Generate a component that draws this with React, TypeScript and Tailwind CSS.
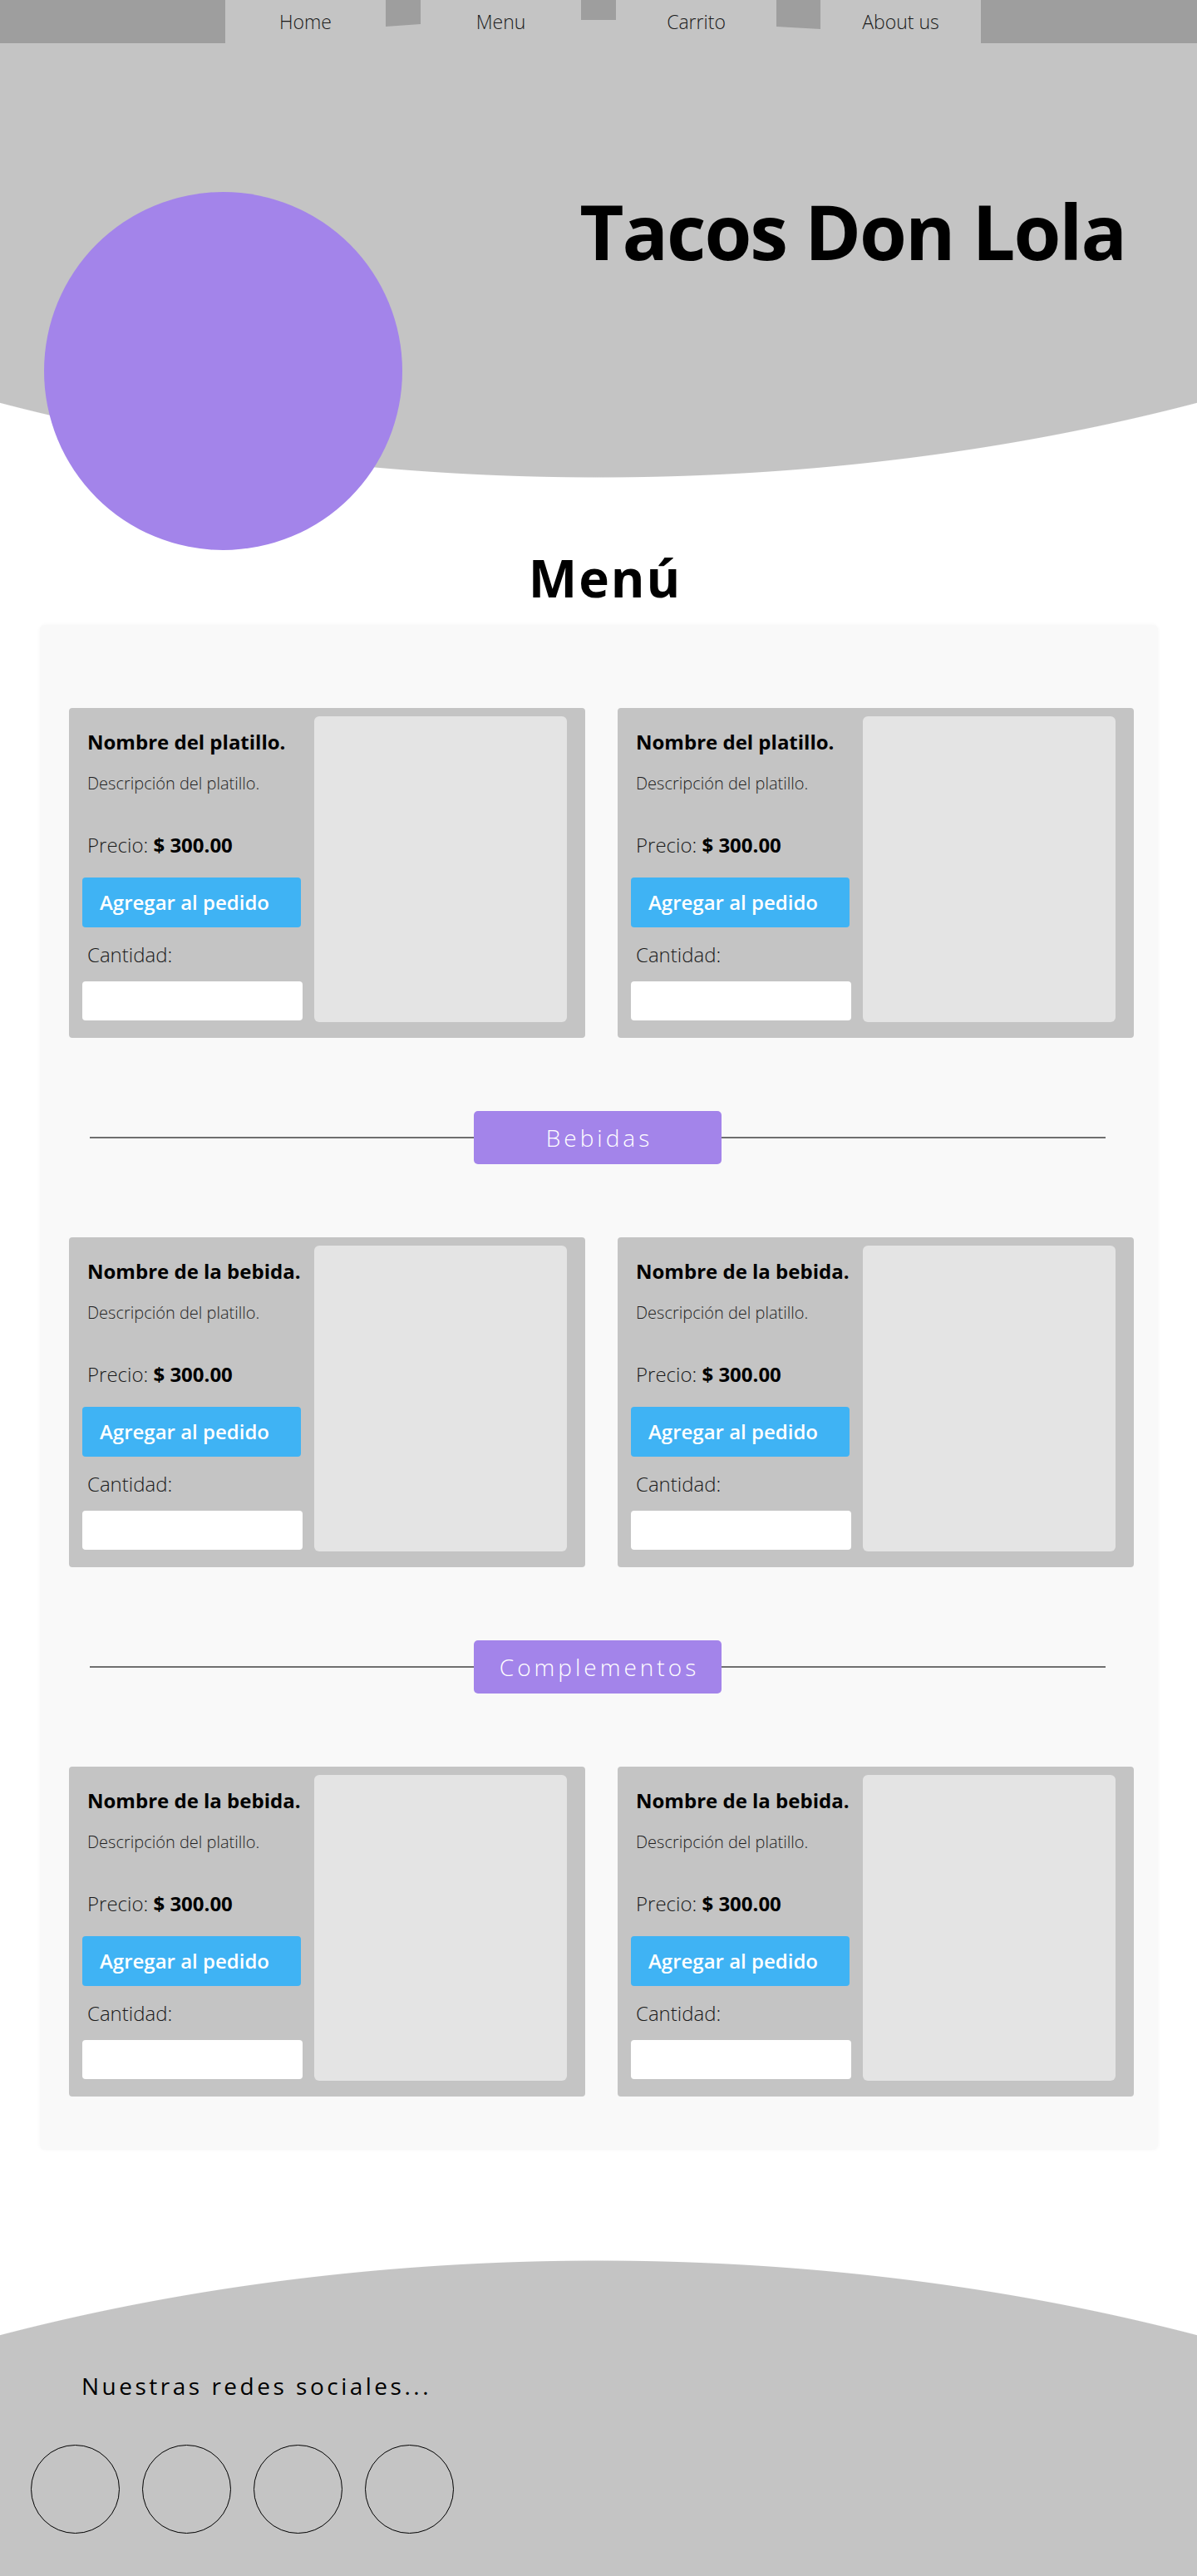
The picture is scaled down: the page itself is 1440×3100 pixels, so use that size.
import React from 'react'

const sections = [
  { divider: null, title: 'Nombre del platillo.' },
  { divider: 'Bebidas', title: 'Nombre de la bebida.' },
  { divider: 'Complementos', title: 'Nombre de la bebida.' },
]

function NavItem({ label }: { label: string }) {
  return (
    <div className="flex h-[52px] w-[193px] items-center justify-center text-[23px] font-light leading-none text-[#1a1a1a]">
      {label}
    </div>
  )
}

function Card({ title }: { title: string }) {
  return (
    <div className="flex h-[397px] w-[621px] gap-[14px] rounded-[4px] bg-[#c4c4c4] pl-[16px] pr-[22px] pt-[10px]">
      <div className="flex w-[265px] flex-col">
        <p className="mt-[19px] pl-[6px] text-[24px] font-bold leading-none text-black">{title}</p>
        <p className="mt-[28px] pl-[6px] text-[20px] font-light leading-none text-[#1f1f1f]">
          Descripción del platillo.
        </p>
        <p className="mt-[52px] pl-[6px] text-[24px] font-light leading-none text-[#1a1a1a]">
          Precio: <span className="font-bold text-black">$ 300.00</span>
        </p>
        <button className="mt-[27px] flex h-[60px] w-[263px] items-center rounded-[4px] bg-[#3fb3f4] pl-[21px] text-[24px] font-semibold leading-none text-white">
          Agregar al pedido
        </button>
        <p className="mt-[21px] pl-[6px] text-[24px] font-light leading-none text-[#1a1a1a]">Cantidad:</p>
        <input className="mt-[20px] h-[47px] w-[265px] rounded-[4px] bg-white outline-none" />
      </div>
      <div className="h-[368px] w-[304px] rounded-[6px] bg-[#e4e4e4]" />
    </div>
  )
}

function Divider({ label }: { label: string }) {
  return (
    <div className="ml-[60px] flex h-[64px] w-[1222px] items-center">
      <div className="h-[2px] flex-1 bg-[#6f6f6f]" />
      <div className="flex h-[64px] w-[298px] items-center justify-center rounded-[5px] bg-[#a384ea] pl-[4px] text-[28px] font-light leading-none tracking-[4px] text-white">
        {label}
      </div>
      <div className="h-[2px] flex-1 bg-[#6f6f6f]" />
    </div>
  )
}

export default function App() {
  return (
    <div className="relative min-h-[3100px] w-[1440px] overflow-hidden bg-white font-['Open_Sans',sans-serif]">
      {/* Header */}
      <header className="h-[575px] bg-[radial-gradient(ellipse_1740px_1000px_at_720px_-425px,#c4c4c4_99.9%,transparent_100%)]">
        <nav className="flex h-[52px]">
          <div className="h-[52px] w-[271px] bg-[#9e9e9e]" />
          <NavItem label="Home" />
          <div className="h-[52px] w-[42px] bg-[#9e9e9e] [clip-path:polygon(0_0,100%_0,100%_29px,0_32px)]" />
          <NavItem label="Menu" />
          <div className="h-[24px] w-[42px] bg-[#9e9e9e]" />
          <NavItem label="Carrito" />
          <div className="h-[52px] w-[53px] bg-[#9e9e9e] [clip-path:polygon(0_0,100%_0,100%_35px,0_32px)]" />
          <NavItem label="About us" />
          <div className="h-[52px] flex-1 bg-[#9e9e9e]" />
        </nav>
        <div className="mt-[180px] flex justify-end pr-[86px]">
          <h1 className="text-[92px] font-bold leading-none tracking-[-2px] text-black">Tacos Don Lola</h1>
        </div>
      </header>

      {/* Logo */}
      <div className="absolute left-[53px] top-[231px] h-[431px] w-[431px] rounded-full bg-[#a384ea]" />

      {/* Menu */}
      <h2 className="mt-[89px] pl-[16px] text-center text-[62px] font-bold leading-none tracking-[2px] text-black">Menú</h2>

      <section className="ml-[48px] mt-[26px] w-[1345px] rounded-[6px] bg-[#f9f9f9] pb-[64px] pl-[35px] pr-[29px] pt-[100px] shadow-[0_0_4px_rgba(0,0,0,0.04)]">
        {sections.map((s, i) => (
          <div key={i}>
            {s.divider && (
              <div className="-ml-[35px] my-[88px]">
                <Divider label={s.divider} />
              </div>
            )}
            <div className="grid grid-cols-[621px_621px] gap-x-[39px]">
              <Card title={s.title} />
              <Card title={s.title} />
            </div>
          </div>
        ))}
      </section>

      {/* Footer */}
      <footer className="mt-[133px] h-[380px] bg-[radial-gradient(ellipse_1740px_1000px_at_720px_1000px,#c4c4c4_99.9%,transparent_100%)] pt-[137px]">
        <p className="pl-[98px] text-[28px] font-normal leading-none tracking-[3.5px] text-black">Nuestras redes sociales...</p>
        <div className="mt-[57px] flex gap-[27px] pl-[37px]">
          {[0, 1, 2, 3].map((n) => (
            <div key={n} className="h-[107px] w-[107px] rounded-full border border-black" />
          ))}
        </div>
      </footer>
    </div>
  )
}
